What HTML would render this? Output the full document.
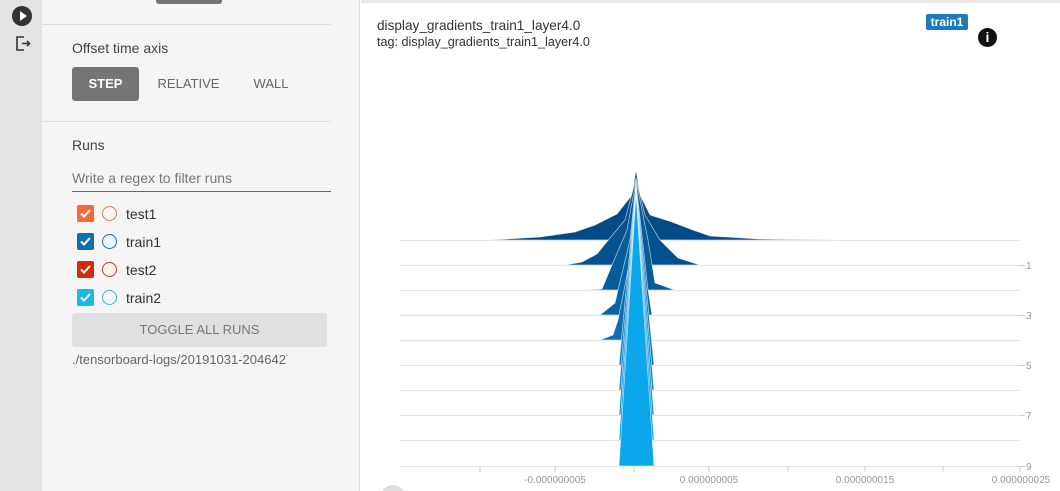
<!DOCTYPE html>
<html style="width:1060px;height:491px;overflow:hidden"><head><style>
*{box-sizing:border-box;margin:0;padding:0}
body{width:1060px;height:491px;overflow:hidden;background:#fff;font-family:"Liberation Sans",sans-serif;position:relative}
.strip{position:absolute;left:0;top:0;width:42px;height:491px;background:#e3e3e3}
.side{position:absolute;left:42px;top:0;width:318px;height:491px;background:#f5f5f5;border-right:1px solid #ddd}
.hr{position:absolute;left:42px;width:289px;height:1px;background:#ddd}
.t{position:absolute;color:#444;font-size:14px}
.btn{position:absolute;top:67px;height:34px;font-size:13px;line-height:34px;text-align:center;color:#666}
.cb{position:absolute;left:77px;width:17px;height:17px;border-radius:2px}
.cb svg{position:absolute;left:2px;top:2px}
.ci{position:absolute;left:102px;width:15px;height:15px;border-radius:50%;border:1.5px solid}
.rl{position:absolute;left:126px;font-size:14px;color:#333}
</style></head><body>
<div class="strip"></div>
<div style="position:absolute;left:12px;top:6px;width:20px;height:20px;border-radius:50%;background:#333"><div style="position:absolute;left:8px;top:5px;border-left:7px solid #fff;border-top:5px solid transparent;border-bottom:5px solid transparent"></div></div>
<svg style="position:absolute;left:15px;top:36px" width="18" height="16" viewBox="0 0 18 16"><path d="M9 1H2v13h7M7 7.5h7M12 5l2.5 2.5L12 10" fill="none" stroke="#333" stroke-width="1.6"/></svg>
<div class="side"></div>
<div style="position:absolute;left:156px;top:0;width:66px;height:4px;background:#757575;border-radius:0 0 3px 3px"></div>
<div class="hr" style="top:24px"></div>
<div class="t" style="left:72px;top:40px">Offset time axis</div>
<div class="btn" style="left:72px;width:67px;background:#757575;color:#fff;border-radius:3px;font-weight:bold">STEP</div>
<div class="btn" style="left:150px;width:77px">RELATIVE</div>
<div class="btn" style="left:240px;width:62px">WALL</div>
<div class="hr" style="top:121px"></div>
<div class="t" style="left:72px;top:137px">Runs</div>
<div class="t" style="left:72px;top:170px;color:#777">Write a regex to filter runs</div>
<div style="position:absolute;left:72px;top:191px;width:259px;height:1px;background:#666"></div>
<div class="cb" style="top:205px;background:#f26b2f"><svg width="13" height="13"><path d="M2 6.5l3 3 6-6.5" stroke="#fff" stroke-width="2" fill="none"/></svg></div>
<div class="ci" style="top:206px;border-color:#f07040"></div><div class="rl" style="top:206px">test1</div>
<div class="cb" style="top:233px;background:#0b70b3"><svg width="13" height="13"><path d="M2 6.5l3 3 6-6.5" stroke="#fff" stroke-width="2" fill="none"/></svg></div>
<div class="ci" style="top:234px;border-color:#1a72b5"></div><div class="rl" style="top:234px">train1</div>
<div class="cb" style="top:261px;background:#d72a0a"><svg width="13" height="13"><path d="M2 6.5l3 3 6-6.5" stroke="#fff" stroke-width="2" fill="none"/></svg></div>
<div class="ci" style="top:262px;border-color:#c53a1a"></div><div class="rl" style="top:262px">test2</div>
<div class="cb" style="top:289px;background:#1ab7ef"><svg width="13" height="13"><path d="M2 6.5l3 3 6-6.5" stroke="#fff" stroke-width="2" fill="none"/></svg></div>
<div class="ci" style="top:290px;border-color:#2ab8e6"></div><div class="rl" style="top:290px">train2</div>
<div style="position:absolute;left:72px;top:313px;width:255px;height:34px;background:#e0e0e0;border-radius:3px;font-size:13px;line-height:34px;text-align:center;color:#777">TOGGLE ALL RUNS</div>
<div class="t" style="left:72px;top:352px;font-size:13px;color:#666">./tensorboard-logs/20191031-204642</div>

<div style="position:absolute;left:361px;top:0;width:699px;height:3px;background:#e8e8e8"></div>
<div class="t" style="left:377px;top:18px;font-size:13.6px;color:#333">display_gradients_train1_layer4.0</div>
<div class="t" style="left:377px;top:35px;font-size:12.6px;color:#333">tag: display_gradients_train1_layer4.0</div>
<div style="position:absolute;left:926px;top:14px;width:42px;height:16px;background:#1a7bbd;border-radius:2px;color:#fff;font-size:12px;font-weight:bold;text-align:center;line-height:16px">train1</div>
<div style="position:absolute;left:978px;top:28px;width:19px;height:19px;border-radius:50%;background:#111;color:#fff;font-size:14px;font-weight:bold;text-align:center;line-height:19px;font-family:'Liberation Sans',sans-serif">i</div>
<div style="position:absolute;left:380px;top:485px;width:26px;height:6px;overflow:hidden"><div style="width:26px;height:26px;border-radius:50%;background:#ddd"></div></div>

<svg style="position:absolute;left:0;top:0" width="1060" height="491">
<g stroke="#e3e3e3" stroke-width="1.2">
<line x1="400" y1="240.5" x2="1020" y2="240.5"/><line x1="400" y1="265.5" x2="1020" y2="265.5"/><line x1="400" y1="290.5" x2="1020" y2="290.5"/><line x1="400" y1="315.5" x2="1020" y2="315.5"/><line x1="400" y1="340.5" x2="1020" y2="340.5"/><line x1="400" y1="365.5" x2="1020" y2="365.5"/><line x1="400" y1="390.5" x2="1020" y2="390.5"/><line x1="400" y1="415.5" x2="1020" y2="415.5"/><line x1="400" y1="440.5" x2="1020" y2="440.5"/><line x1="400" y1="466.5" x2="1020" y2="466.5"/>
</g>
<g stroke="#ccc"><line x1="480" y1="466" x2="480" y2="472"/><line x1="555" y1="466" x2="555" y2="472"/><line x1="634" y1="466" x2="634" y2="472"/><line x1="709" y1="466" x2="709" y2="472"/><line x1="788" y1="466" x2="788" y2="472"/><line x1="865" y1="466" x2="865" y2="472"/><line x1="943" y1="466" x2="943" y2="472"/><line x1="1020" y1="466" x2="1020" y2="472"/>
<line x1="1020" y1="265.5" x2="1025" y2="265.5"/><line x1="1020" y1="315.5" x2="1025" y2="315.5"/><line x1="1020" y1="365.5" x2="1025" y2="365.5"/><line x1="1020" y1="415.5" x2="1025" y2="415.5"/><line x1="1020" y1="466.5" x2="1025" y2="466.5"/></g>
<g fill="#999" font-size="10" font-family="Liberation Sans" text-anchor="middle">
<text x="555" y="483">-0.000000005</text><text x="709" y="483">0.000000005</text><text x="865" y="483">0.000000015</text><text x="1021" y="483">0.000000025</text>
</g>
<g fill="#999" font-size="10" font-family="Liberation Sans"><text x="1026" y="269">1</text><text x="1026" y="319">3</text><text x="1026" y="369">5</text><text x="1026" y="419">7</text><text x="1026" y="470">9</text></g>
<g stroke="#fff" stroke-width="0.7" stroke-opacity="0.7">
<polygon fill="#004a86" points="490,240 540,237 575,232 595,225 617,214 632,195 636,170 640,195 650,215 672,222 693,230 710,236 760,239 835,240"/>
<polygon fill="#03528f" points="565,265 582,262 597,254 610,238 625,220 636,178 645,215 660,240 678,258 700,265"/>
<polygon fill="#065c9b" points="585,290 602,289 612,265 627,230 636,180 648,240 655,283 675,290"/>
<polygon fill="#0866a7" points="600,315 615,303 618,290 630,240 636,182 648,290 652,315"/>
<polygon fill="#0a70b3" points="600,340 613,335 618,320 630,260 636,184 648,320 652,340"/>
<polygon fill="#0b7bbf" points="619,365 636,186 654,365"/>
<polygon fill="#0c86cb" points="619,390 636,188 654,390"/>
<polygon fill="#0c91d6" points="619,415 636,190 654,415"/>
<polygon fill="#0c9be0" points="619,440 636,192 654,440"/>
<polygon fill="#0ca6ea" points="619,466 636,194 654,466"/>
</g>
</svg>
</body></html>
